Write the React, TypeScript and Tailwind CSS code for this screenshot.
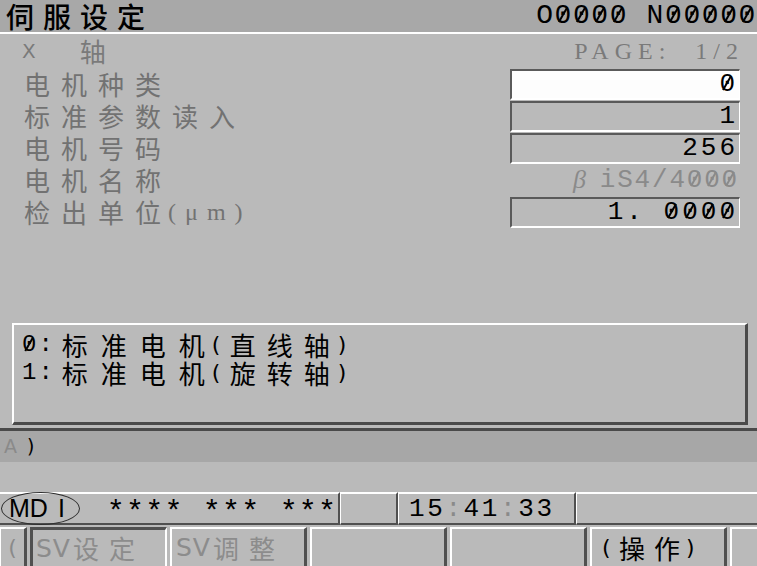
import React from "react";

const cjk = "font-['Noto_Sans_CJK_SC',sans-serif]";
const mono = "font-['Liberation_Mono',monospace]";
const sans = "font-['DejaVu_Sans',sans-serif]";

type Row = {
  label: string;
  unit?: string;
  value: string;
  kind: "active" | "box" | "plain";
};

const rows: Row[] = [
  { label: "电机种类", value: "0", kind: "active" },
  { label: "标准参数读入", value: "1", kind: "box" },
  { label: "电机号码", value: "256", kind: "box" },
  { label: "电机名称", value: "β iS4/4000", kind: "plain" },
  { label: "检出单位", unit: "(μm)", value: "1. 0000", kind: "box" },
];

const messages = [
  { num: "0:", text: "标准电机", inner: "直线轴" },
  { num: "1:", text: "标准电机", inner: "旋转轴" },
];

const softkeys = ["SV设定", "SV调整", "", "", "操作"];

// CNC screen font draws zero with a slash
function Slashed({ text, gray }: { text: string; gray?: boolean }) {
  return (
    <span className="whitespace-pre">
      {text.split("").map((c, i) =>
        c === "0" ? (
          <span key={i} className="relative inline-block">
            0
            <span
              className={`absolute left-[0.27em] top-[0.16em] block w-0 h-[0.62em] border-l-[2px] rotate-[30deg] ${
                gray ? "border-l-[#8a8a8a]" : "border-l-black"
              }`}
            />
          </span>
        ) : (
          <React.Fragment key={i}>{c}</React.Fragment>
        )
      )}
    </span>
  );
}

export default function App() {
  return (
    <div className="w-[757px] h-[566px] overflow-hidden bg-[#bababa] flex flex-col select-none">
      {/* TITLE BAR */}
      <div className="h-[32px] bg-[#a8a8a8] flex items-center justify-between pl-[6px] shrink-0">
        <span className={`${cjk} text-[28px] leading-[32px] tracking-[9px] text-black font-medium`}>
          伺服设定
        </span>
        <span className={`${mono} text-[28px] leading-none tracking-[1.6px] text-black whitespace-nowrap`}>
          <Slashed text="O0000 N00000" />
        </span>
      </div>
      <div className="h-[2px] bg-white shrink-0" />

      {/* MAIN */}
      <div className="h-[397px] shrink-0 flex flex-col border-b-[3px] border-[#4a4a4a] pl-[20px] pr-[17px]">
        <div className="h-[34px] flex items-center justify-between">
          <div className="flex items-center text-[#7a7a7a]">
            <span className={`${sans} text-[20px] leading-none pl-[2px]`}>X</span>
            <span className={`${cjk} text-[26px] leading-none ml-[44px]`}>轴</span>
          </div>
          <span className="font-['Liberation_Serif',serif] text-[24px] leading-none tracking-[6px] text-[#7a7a7a] whitespace-nowrap -mr-[4px]">
            PAGE:&nbsp;&nbsp;1/2
          </span>
        </div>

        <div className="flex flex-col">
          {rows.map((r) => (
            <div key={r.label} className="h-[32px] flex items-center justify-between">
              <div className="flex items-center text-[#727272] pl-[4px] whitespace-nowrap">
                <span className={`${cjk} text-[26px] leading-none tracking-[11px]`}>{r.label}</span>
                {r.unit && (
                  <span className="font-['Liberation_Serif',serif] text-[24px] leading-none tracking-[9px] -ml-[4px]">
                    {r.unit}
                  </span>
                )}
              </div>
              {r.kind === "plain" ? (
                <div className={`w-[230px] h-[31px] flex items-center justify-end pr-[1px] ${mono} text-[26px] leading-none tracking-[1.8px] text-[#8a8a8a] whitespace-nowrap`}>
                  <span className="font-['Liberation_Serif',serif] italic mr-[12px]">β</span>
                  <Slashed text="iS4/4000" gray />
                </div>
              ) : (
                <div
                  className={`w-[230px] h-[31px] flex items-center justify-end pr-[1px] border-t-2 border-l-2 border-t-[#5a5a5a] border-l-[#5a5a5a] border-b-2 border-r border-b-white border-r-white ${mono} text-[26px] leading-none tracking-[3px] text-black whitespace-nowrap ${
                    r.kind === "active" ? "bg-[#fdfdfd]" : "bg-[#bababa]"
                  }`}
                >
                  <Slashed text={r.value} />
                </div>
              )}
            </div>
          ))}
        </div>

        {/* MESSAGE BOX */}
        <div className="mt-auto mb-[3px] -ml-[8px] w-[736px] h-[102px] border-t-2 border-l-2 border-white border-b-[3px] border-r-[3px] border-b-[#4a4a4a] border-r-[#4a4a4a] pl-[8px] pt-[6px]">
          {messages.map((m) => (
            <div key={m.inner} className="h-[28px] flex items-center text-black whitespace-nowrap">
              <span className={`${mono} text-[24px] leading-none tracking-[2px]`}>
                <Slashed text={m.num} />
              </span>
              <span className={`${cjk} text-[26px] leading-none tracking-[13px] ml-[7px]`}>{m.text}</span>
              <span className={`${sans} text-[22px] leading-none -ml-[6px] w-[18px]`}>(</span>
              <span className={`${cjk} text-[26px] leading-none tracking-[11px]`}>{m.inner}</span>
              <span className={`${sans} text-[22px] leading-none -ml-[3px]`}>)</span>
            </div>
          ))}
        </div>
      </div>

      {/* INPUT LINE */}
      <div className="h-[31px] bg-[#a7a7a7] flex items-center pl-[4px] shrink-0">
        <span className={`${sans} text-[19px] leading-none text-[#8a8a8a]`}>A</span>
        <span className={`${sans} text-[19px] leading-none text-black ml-[10px]`}>)</span>
      </div>

      <div className="h-[30px] shrink-0" />

      {/* STATUS LINE */}
      <div className="h-[33px] flex shrink-0">
        <div className="w-[340px] relative flex items-center whitespace-nowrap border-t-2 border-white border-b-2 border-r-2 border-b-[#505050] border-r-[#505050]">
          <div className="absolute left-[1px] top-[-2px] w-[79px] h-[33px] rounded-[50%] border border-[#303030]" />
          <span className="font-['Liberation_Sans',sans-serif] text-[25px] leading-none text-black ml-[9px] shrink-0">
            MD<span className="ml-[10px]">I</span>
          </span>
          <span className={`${mono} text-[30px] leading-none text-black ml-[42px] tracking-[1.2px] pt-[8px] shrink-0`}>
            **** *** ***
          </span>
        </div>
        <div className="w-[58px] border-t-2 border-l border-white border-b-2 border-r-2 border-b-[#505050] border-r-[#505050]" />
        <div className="w-[178px] flex items-center pl-[10px] whitespace-nowrap border-t-2 border-l border-white border-b-2 border-r-2 border-b-[#505050] border-r-[#505050]">
          <span className={`${mono} text-[26px] leading-none tracking-[2.6px] text-black`}>
            15<span className="text-[#8a8a8a]">:</span>41<span className="text-[#8a8a8a]">:</span>33
          </span>
        </div>
        <div className="flex-1 border-t-2 border-l border-white border-b-2 border-b-[#505050]" />
      </div>

      {/* SOFTKEYS */}
      <div className="flex-1 flex gap-[3px] pt-[2px]">
        <div className="w-[27px] flex items-center justify-center border-t-2 border-l border-white border-r-[3px] border-r-[#505050]">
          <span className={`${sans} text-[22px] leading-none text-[#8a8a8a]`}>(</span>
        </div>
        {softkeys.map((k, i) => {
          const pressed = i === 0;
          return (
            <div
              key={i}
              className={`w-[137px] flex items-center whitespace-nowrap ${
                pressed
                  ? "border-t-[3px] border-l-[3px] border-[#505050] border-r-2 border-r-white pl-[3px]"
                  : "border-t-2 border-l-2 border-white border-r-[3px] border-r-[#505050] pl-[4px]"
              }`}
            >
              {k.startsWith("SV") && (
                <>
                  <span className={`${sans} text-[25px] leading-none text-[#8c8c8c] tracking-[1px]`}>SV</span>
                  <span className={`${cjk} text-[26px] leading-none text-[#8c8c8c] tracking-[10px] ml-[2px]`}>
                    {k.slice(2)}
                  </span>
                </>
              )}
              {k === "操作" && (
                <span className="flex items-center text-black ml-[6px]">
                  <span className={`${sans} text-[22px] leading-none w-[17px]`}>(</span>
                  <span className={`${cjk} text-[26px] leading-none tracking-[9px]`}>{k}</span>
                  <span className={`${sans} text-[22px] leading-none -ml-[3px]`}>)</span>
                </span>
              )}
            </div>
          );
        })}
        <div className="flex-1 border-t-2 border-l-2 border-white" />
      </div>
    </div>
  );
}
